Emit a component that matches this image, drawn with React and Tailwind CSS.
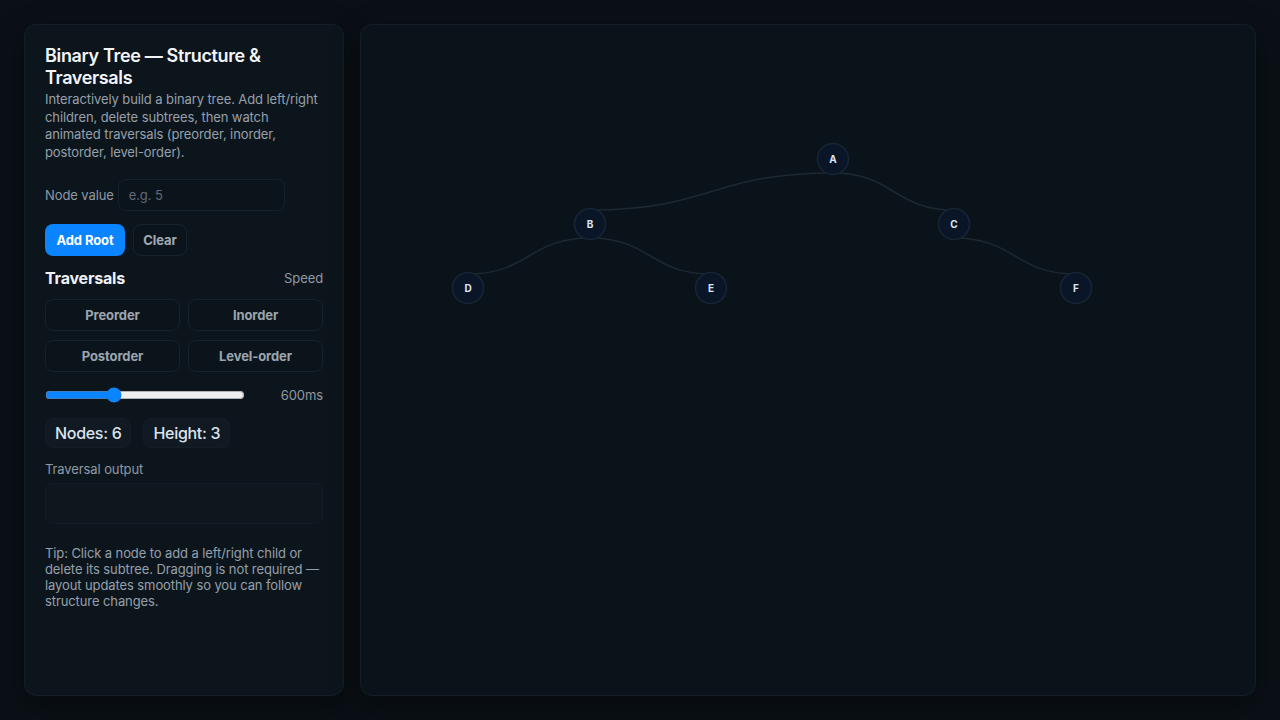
import React from "react";

const nodes = [
  { id: "A", x: 472, y: 134 },
  { id: "B", x: 229, y: 199 },
  { id: "C", x: 593, y: 199 },
  { id: "D", x: 107, y: 263 },
  { id: "E", x: 350, y: 263 },
  { id: "F", x: 715, y: 263 },
];
const edges = [
  ["A", "B"],
  ["A", "C"],
  ["B", "D"],
  ["B", "E"],
  ["C", "F"],
];

function edgePath(p, c) {
  const y1 = p.y + 14;
  const y2 = c.y - 14;
  const mx = (p.x + c.x) / 2;
  return `M ${p.x} ${y1} C ${mx} ${y1}, ${mx} ${y2}, ${c.x} ${y2}`;
}

export default function App() {
  const byId = Object.fromEntries(nodes.map((n) => [n.id, n]));
  return (
    <div
      className="w-[1280px] h-[720px] bg-[#0a1016] flex gap-4 p-6 text-[13px] tracking-[-0.1px]"
      style={{ fontFamily: "Inter, 'Noto Sans', sans-serif" }}
    >
      <div className="w-[320px] shrink-0 rounded-xl border border-[#151e27] bg-[#0d151c] p-5 flex flex-col shadow-[0_10px_30px_rgba(0,0,0,0.35)]">
        <h1 className="text-[18px] leading-[1.2] font-semibold text-[#f2f5f8] tracking-[-0.35px]">
          Binary Tree — Structure &amp; Traversals
        </h1>
        <p className="mt-[3px] text-[13px] leading-[1.35] text-[#96a0ab]">
          Interactively build a binary tree. Add left/right children, delete subtrees, then watch animated traversals (preorder, inorder, postorder, level-order).
        </p>
        <div className="mt-[18px] flex items-center gap-1">
          <span className="text-[#8f99a4]">Node value</span>
          <input
            placeholder="e.g. 5"
            className="w-[167px] h-8 rounded-lg border border-[#18222c] bg-[#0c141b] px-[10px] text-[13px] text-[#d7dee6] placeholder:text-[#5f6b77] outline-none"
          />
        </div>
        <div className="mt-[13px] flex gap-2">
          <button className="h-8 w-20 rounded-lg bg-[#0a84ff] text-[13px] font-bold text-white">
            Add Root
          </button>
          <button className="h-8 w-[54px] rounded-lg border border-[#18222c] bg-[#0c141b] text-[13px] font-bold text-[#a0aab4]">
            Clear
          </button>
        </div>
        <div className="mt-[10px] flex items-center justify-between h-6">
          <span className="text-[16px] font-bold text-[#eef2f6] tracking-[-0.2px]">Traversals</span>
          <span className="text-[#8f99a4]">Speed</span>
        </div>
        <div className="mt-[9px] grid grid-cols-2 gap-x-2 gap-y-[9px]">
          {["Preorder", "Inorder", "Postorder", "Level-order"].map((t) => (
            <button
              key={t}
              className="h-8 rounded-lg border border-[#18222c] bg-[#0c141b] text-[13px] font-bold text-[#9ba5af]"
            >
              {t}
            </button>
          ))}
        </div>
        <div className="mt-[12px] flex items-center justify-between h-[22px]">
          <input
            type="range"
            min="200"
            max="1400"
            defaultValue="600"
            className="w-[200px] accent-[#0a84ff]"
          />
          <span className="text-[#8f99a4]">600ms</span>
        </div>
        <div className="mt-3 flex gap-3">
          <div className="h-[30px] px-[9px] flex items-center rounded-lg border border-[#141d26] bg-[#111a23] text-[16px] font-medium text-[#dbe4ee] tracking-[-0.3px]">
            Nodes: 6
          </div>
          <div className="h-[30px] px-[9px] flex items-center rounded-lg border border-[#141d26] bg-[#111a23] text-[16px] font-medium text-[#dbe4ee] tracking-[-0.3px]">
            Height: 3
          </div>
        </div>
        <div className="mt-[13px] text-[#8f99a4] leading-4">Traversal output</div>
        <div className="mt-[6px] h-[41px] rounded-lg border border-[#131c25] bg-[#0e161e]"></div>
        <p className="mt-[21px] text-[13px] leading-4 text-[#96a0ab]">
          Tip: Click a node to add a left/right child or delete its subtree. Dragging is not required — layout updates smoothly so you can follow structure changes.
        </p>
      </div>
      <div className="relative flex-1 rounded-xl border border-[#151e27] bg-[#0b131a] shadow-[0_10px_30px_rgba(0,0,0,0.35)] overflow-hidden">
        <svg className="absolute inset-0 w-full h-full">
          {edges.map(([a, b]) => (
            <path
              key={a + b}
              d={edgePath(byId[a], byId[b])}
              fill="none"
              stroke="#1d2833"
              strokeWidth="1.5"
            />
          ))}
          {nodes.map((n) => (
            <g key={n.id}>
              <circle cx={n.x} cy={n.y} r="15.5" fill="#0a1628" stroke="#182536" strokeWidth="1.5" />
              <text
                x={n.x}
                y={n.y + 3.5}
                textAnchor="middle"
                fontSize="10"
                fontWeight="700"
                fill="#dce6f3"
                style={{ fontFamily: "Inter, sans-serif" }}
              >
                {n.id}
              </text>
            </g>
          ))}
        </svg>
      </div>
    </div>
  );
}
